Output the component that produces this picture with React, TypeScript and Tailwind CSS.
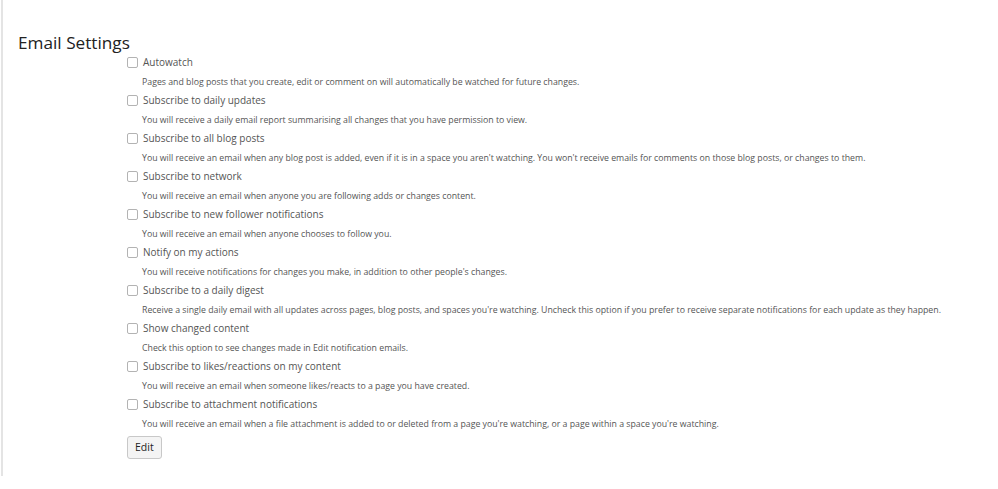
const options = [
  {
    label: "Autowatch",
    description:
      "Pages and blog posts that you create, edit or comment on will automatically be watched for future changes.",
  },
  {
    label: "Subscribe to daily updates",
    description: "You will receive a daily email report summarising all changes that you have permission to view.",
  },
  {
    label: "Subscribe to all blog posts",
    description:
      "You will receive an email when any blog post is added, even if it is in a space you aren't watching. You won't receive emails for comments on those blog posts, or changes to them.",
  },
  {
    label: "Subscribe to network",
    description: "You will receive an email when anyone you are following adds or changes content.",
  },
  {
    label: "Subscribe to new follower notifications",
    description: "You will receive an email when anyone chooses to follow you.",
  },
  {
    label: "Notify on my actions",
    description: "You will receive notifications for changes you make, in addition to other people's changes.",
  },
  {
    label: "Subscribe to a daily digest",
    description:
      "Receive a single daily email with all updates across pages, blog posts, and spaces you're watching. Uncheck this option if you prefer to receive separate notifications for each update as they happen.",
  },
  {
    label: "Show changed content",
    description: "Check this option to see changes made in Edit notification emails.",
  },
  {
    label: "Subscribe to likes/reactions on my content",
    description: "You will receive an email when someone likes/reacts to a page you have created.",
  },
  {
    label: "Subscribe to attachment notifications",
    description:
      "You will receive an email when a file attachment is added to or deleted from a page you're watching, or a page within a space you're watching.",
  },
];

export default function App() {
  return (
    <div className="h-[489px] w-[998px] bg-white" style={{ fontFamily: '"Open Sans", "Noto Sans", sans-serif' }}>
      <div className="ml-px h-[476px] border-l-2 border-[#e4e4e4] pt-[31px]">
        <h2 className="pl-[15px] text-[17.2px] leading-[24px] text-[#222]">Email Settings</h2>
        <div className="ml-[124px] mt-[-2px]">
          {options.map((o) => (
            <div key={o.label} className="h-[38px]">
              <label className="flex h-[18px] items-center gap-[5px] text-[10px] text-[#555]">
                <span className="h-[11px] w-[11px] rounded-[2px] border border-[#b3b3b3] bg-white" />
                {o.label}
              </label>
              <p className="mt-[2px] pl-[15px] text-[8.75px] leading-[19px] text-[#555]">{o.description}</p>
            </div>
          ))}
          <button className="mt-[-4px] h-[23px] rounded-[3px] border border-[#c8c8c8] bg-[#f4f4f4] px-[7px] text-[10.5px] text-[#222]">
            Edit
          </button>
        </div>
      </div>
    </div>
  );
}
